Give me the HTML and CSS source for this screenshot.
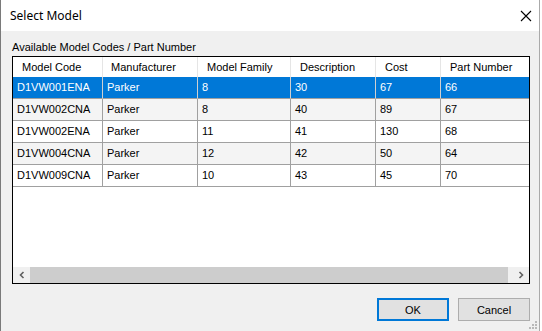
FILE: index.html
```html
<!DOCTYPE html>
<html lang="en">
    <head>
        <meta charset="UTF-8">
        <meta name="viewport" content="width=device-width, initial-scale=1.0">
        <title>Select Model</title>
        <link rel="stylesheet" href="styles.css">
    </head>
    <body>
        <div class="window">
            <div class="titlebar">
                <span class="title">Select Model</span>
                <svg class="close" width="12" height="12" viewBox="0 0 12 12">
                    <path d="M1 1 L11 11 M11 1 L1 11" stroke="#000" stroke-width="1.1" fill="none"/>
                </svg>
            </div>
            <div class="client">
                <div class="caption">Available Model Codes / Part Number</div>
                <div class="gridview">
                    <div class="row head">
                        <div class="cell">Model Code</div>
                        <div class="cell">Manufacturer</div>
                        <div class="cell">Model Family</div>
                        <div class="cell">Description</div>
                        <div class="cell">Cost</div>
                        <div class="cell">Part Number</div>
                    </div>
                    <div class="row selected">
                        <div class="cell">D1VW001ENA</div>
                        <div class="cell">Parker</div>
                        <div class="cell">8</div>
                        <div class="cell">30</div>
                        <div class="cell">67</div>
                        <div class="cell">66</div>
                    </div>
                    <div class="row alt">
                        <div class="cell">D1VW002CNA</div>
                        <div class="cell">Parker</div>
                        <div class="cell">8</div>
                        <div class="cell">40</div>
                        <div class="cell">89</div>
                        <div class="cell">67</div>
                    </div>
                    <div class="row">
                        <div class="cell">D1VW002ENA</div>
                        <div class="cell">Parker</div>
                        <div class="cell">11</div>
                        <div class="cell">41</div>
                        <div class="cell">130</div>
                        <div class="cell">68</div>
                    </div>
                    <div class="row alt">
                        <div class="cell">D1VW004CNA</div>
                        <div class="cell">Parker</div>
                        <div class="cell">12</div>
                        <div class="cell">42</div>
                        <div class="cell">50</div>
                        <div class="cell">64</div>
                    </div>
                    <div class="row">
                        <div class="cell">D1VW009CNA</div>
                        <div class="cell">Parker</div>
                        <div class="cell">10</div>
                        <div class="cell">43</div>
                        <div class="cell">45</div>
                        <div class="cell">70</div>
                    </div>
                    <div class="empty"></div>
                    <div class="hscroll">
                        <div class="arrow">
                            <svg width="8" height="8" viewBox="0 0 8 8"><path d="M5.5 1 L2.5 4 L5.5 7" stroke="#606060" stroke-width="1.6" fill="none"/></svg>
                        </div>
                        <div class="track"><div class="thumb"></div></div>
                        <div class="arrow">
                            <svg width="8" height="8" viewBox="0 0 8 8"><path d="M2.5 1 L5.5 4 L2.5 7" stroke="#606060" stroke-width="1.6" fill="none"/></svg>
                        </div>
                    </div>
                </div>
                <div class="buttons">
                    <button class="btn default">OK</button>
                    <button class="btn">Cancel</button>
                </div>
            </div>
            <svg class="grip" width="8" height="8" viewBox="0 0 8 8">
                <rect x="6" y="0" width="2" height="2" fill="#b8b8b8"/>
                <rect x="3" y="3" width="2" height="2" fill="#b8b8b8"/>
                <rect x="6" y="3" width="2" height="2" fill="#b8b8b8"/>
                <rect x="0" y="6" width="2" height="2" fill="#b8b8b8"/>
                <rect x="3" y="6" width="2" height="2" fill="#b8b8b8"/>
                <rect x="6" y="6" width="2" height="2" fill="#b8b8b8"/>
            </svg>
        </div>
    </body>
</html>
```
FILE: styles.css
```css
* {box-sizing: border-box;}

body {
    margin: 0;
    background: #ffffff;
    font-family: "Liberation Sans", Arial, sans-serif;
    font-size: 11px;
    color: #000;
}

.window {
    position: relative;
    width: 540px;
    height: 331px;
    border-left: 1px solid #7a7a7a;
    border-right: 1px solid #aaaaaa;
    display: flex;
    flex-direction: column;
}

.titlebar {
    height: 31px;
    background: #fff;
    display: flex;
    align-items: center;
    justify-content: space-between;
    padding: 0 7px 0 9px;
}
.title {
    font-family: "Noto Sans", "Open Sans", sans-serif;
    font-size: 12px;
}

.client {
    flex: 1;
    background: #f0f0f0;
    padding: 7px 9px 0 11px;
}
.caption {
    height: 18px;
    line-height: 19px;
}

.gridview {
    width: 518px;
    height: 228px;
    border: 1px solid #000;
    background: #fff;
    display: flex;
    flex-direction: column;
}
.row {
    display: grid;
    grid-template-columns: 90px 95px 93px 85px 65px 1fr;
    height: 22px;
}
.cell {
    border-right: 1px solid #a0a0a0;
    border-bottom: 1px solid #a0a0a0;
    padding-left: 4px;
    line-height: 21px;
    white-space: nowrap;
    overflow: hidden;
}
.row .cell:last-child {border-right: none;}

.head {height: 20px;}
.head .cell {
    border-right: 1px solid #e5e5e5;
    border-bottom: none;
    padding-left: 9px;
    line-height: 20px;
}
.head .cell:nth-child(2) {padding-left: 8px;}

.alt {background: #f4f4f4;}
.selected {
    background: #0078d7;
    color: #fff;
}
.selected .cell {border-right-color: #d0d0d0;}

.empty {flex: 1;}

.hscroll {
    height: 16px;
    display: flex;
    background: #f0f0f0;
}
.arrow {
    width: 17px;
    display: flex;
    align-items: center;
    justify-content: center;
}
.track {
    flex: 1;
    padding-right: 4px;
}
.thumb {
    height: 100%;
    background: #cdcdcd;
}

.buttons {
    display: flex;
    justify-content: flex-end;
    gap: 9px;
    margin-top: 14px;
}
.btn {
    width: 72px;
    height: 23px;
    font-family: "Liberation Sans", Arial, sans-serif;
    font-size: 11px;
    background: #e1e1e1;
    border: 1px solid #adadad;
    padding: 0;
}
.btn.default {border: 2px solid #0078d7;}

.grip {
    position: absolute;
    right: 2px;
    bottom: 2px;
}
```
